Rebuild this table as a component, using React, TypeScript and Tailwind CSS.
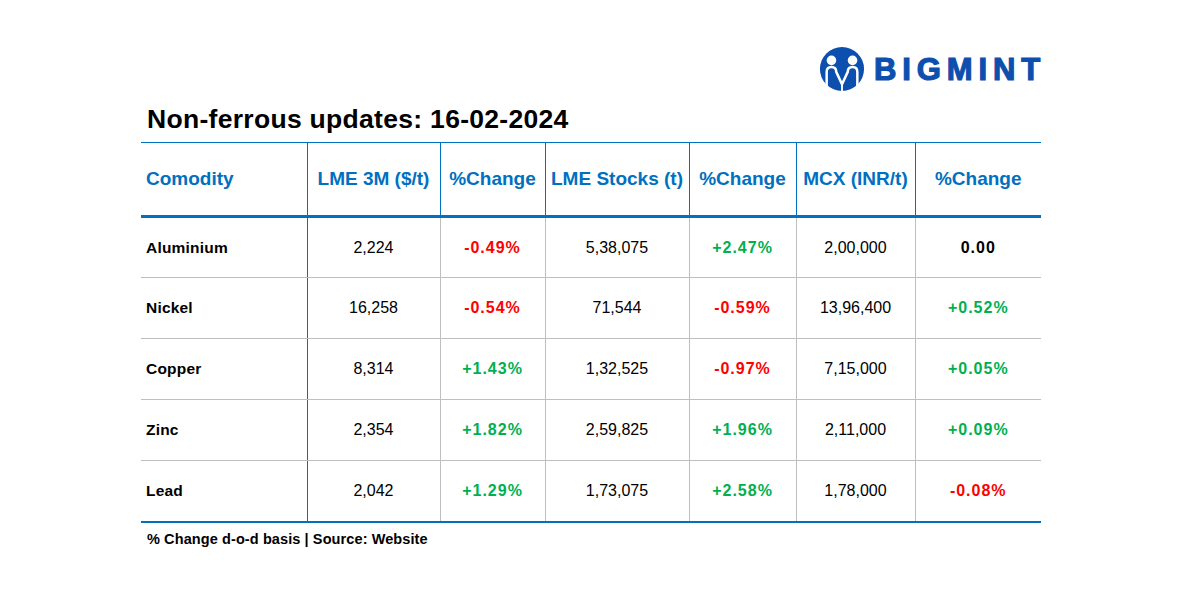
import React from 'react';

type Row = {
  name: string;
  lme: string;
  lmeChg: string;
  stocks: string;
  stocksChg: string;
  mcx: string;
  mcxChg: string;
};

const rows: Row[] = [
  { name: 'Aluminium', lme: '2,224', lmeChg: '-0.49%', stocks: '5,38,075', stocksChg: '+2.47%', mcx: '2,00,000', mcxChg: '0.00' },
  { name: 'Nickel', lme: '16,258', lmeChg: '-0.54%', stocks: '71,544', stocksChg: '-0.59%', mcx: '13,96,400', mcxChg: '+0.52%' },
  { name: 'Copper', lme: '8,314', lmeChg: '+1.43%', stocks: '1,32,525', stocksChg: '-0.97%', mcx: '7,15,000', mcxChg: '+0.05%' },
  { name: 'Zinc', lme: '2,354', lmeChg: '+1.82%', stocks: '2,59,825', stocksChg: '+1.96%', mcx: '2,11,000', mcxChg: '+0.09%' },
  { name: 'Lead', lme: '2,042', lmeChg: '+1.29%', stocks: '1,73,075', stocksChg: '+2.58%', mcx: '1,78,000', mcxChg: '-0.08%' },
];

const widths = ['w-[166px]', 'w-[133px]', 'w-[105px]', 'w-[144px]', 'w-[107px]', 'w-[119px]', 'w-[126px]'];

const Change = ({ value }: { value: string }) => {
  const color = value.startsWith('+') ? 'text-[#00b050]' : value.startsWith('-') ? 'text-[#ff0000]' : 'text-black';
  return <span className={`font-bold tracking-[1px] ${color}`}>{value}</span>;
};

const Logo = () => (
  <div className="flex items-center gap-[9px]">
    <svg width="46" height="46" viewBox="0 0 48 48">
      <circle cx="24" cy="24" r="23" fill="#0d4fae" />
      <circle cx="13" cy="15" r="5" fill="#fff" />
      <circle cx="35" cy="15" r="5" fill="#fff" />
      <path
        d="M8 42 V27 Q8 22 13 22 Q18 22 18 27 L24 40 L30 27 Q30 22 35 22 Q40 22 40 27 V42"
        stroke="#fff"
        strokeWidth="2.6"
        fill="none"
      />
      <path d="M24 40 V47" stroke="#fff" strokeWidth="2" />
    </svg>
    <span className="text-[31px] font-black leading-none tracking-[0.19em] text-[#0d4fae] mr-[-6px] [-webkit-text-stroke:1.2px_#0d4fae]">
      BIGMINT
    </span>
  </div>
);

export default function App() {
  return (
    <div className="w-[1200px] h-[600px] bg-white font-['Liberation_Sans',Arial,sans-serif]">
      <div className="ml-[141px] w-[900px]">
        <div className="flex justify-end pt-[46px] pr-[1px]">
          <Logo />
        </div>
        <h1 className="mt-[9px] ml-[6px] h-[41px] text-[26.5px] font-bold leading-[36px] text-black tracking-[0.3px]">
          Non-ferrous updates: 16-02-2024
        </h1>
        <table className="border-collapse table-fixed w-[900px]">
          <thead>
            <tr className="h-[74px] border-t border-[#0070c0]">
              {['Comodity', 'LME 3M ($/t)', '%Change', 'LME Stocks (t)', '%Change', 'MCX (INR/t)', '%Change'].map((h, i) => (
                <th
                  key={i}
                  className={`${widths[i]} p-0 text-[19px] font-bold text-[#0070c0] border-b-[3px] border-b-[#0070c0] ${
                    i === 0 ? 'text-left pl-[5px]' : 'text-center'
                  } ${i < 6 ? 'border-r border-r-[#0070c0]' : ''}`}
                >
                  {h}
                </th>
              ))}
            </tr>
          </thead>
          <tbody>
            {rows.map((r, idx) => {
              const last = idx === rows.length - 1;
              const rowBorder = last ? 'border-b-2 border-b-[#0070c0]' : 'border-b border-b-[#bfbfbf]';
              return (
                <tr key={r.name} className="h-[61px]">
                  <td className={`pl-[5px] text-[15.5px] tracking-[0.2px] font-bold text-black border-r border-r-[#0070c0] ${rowBorder}`}>{r.name}</td>
                  <td className={`text-center text-[16px] text-black border-r border-r-[#bfbfbf] ${rowBorder}`}>{r.lme}</td>
                  <td className={`text-center text-[16px] border-r border-r-[#bfbfbf] ${rowBorder}`}><Change value={r.lmeChg} /></td>
                  <td className={`text-center text-[16px] text-black border-r border-r-[#bfbfbf] ${rowBorder}`}>{r.stocks}</td>
                  <td className={`text-center text-[16px] border-r border-r-[#bfbfbf] ${rowBorder}`}><Change value={r.stocksChg} /></td>
                  <td className={`text-center text-[16px] text-black border-r border-r-[#bfbfbf] ${rowBorder}`}>{r.mcx}</td>
                  <td className={`text-center text-[16px] ${rowBorder}`}><Change value={r.mcxChg} /></td>
                </tr>
              );
            })}
          </tbody>
        </table>
        <p className="mt-[6px] ml-[6px] text-[14.5px] tracking-[0.1px] font-bold text-black">% Change d-o-d basis | Source: Website</p>
      </div>
    </div>
  );
}
